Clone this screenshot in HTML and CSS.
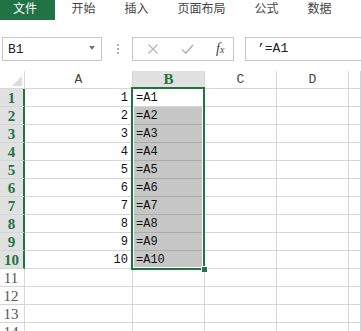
FILE: index.html
```html
<!DOCTYPE html>
<html lang="zh-CN">
<head>
    <meta charset="UTF-8">
    <title>Excel</title>
    <link rel="stylesheet" href="styles.css">
</head>
<body>
    <div class="tabs">
        <div class="tab tab-file">文件</div>
        <div class="tab">开始</div>
        <div class="tab">插入</div>
        <div class="tab">页面布局</div>
        <div class="tab">公式</div>
        <div class="tab">数据</div>
    </div>

    <div class="formula-bar">
        <div class="name-box">
            <span>B1</span>
            <span class="caret"></span>
        </div>
        <div class="grip"><i></i><i></i><i></i></div>
        <div class="fx-buttons">
            <svg width="12" height="12" viewBox="0 0 12 12"><path d="M1.5 1.5 L10.5 10.5 M10.5 1.5 L1.5 10.5" stroke="#b4b4b4" stroke-width="1.2" fill="none"/></svg>
            <svg width="13" height="12" viewBox="0 0 13 12"><path d="M1 6.5 L4.8 10 L12 2" stroke="#b4b4b4" stroke-width="1.6" fill="none"/></svg>
            <span class="fx">f<span>x</span></span>
        </div>
        <div class="formula-input">’=A1</div>
    </div>

    <div class="sheet">
        <div class="grid">
            <div class="corner"></div>
            <div class="col-head">A</div>
            <div class="col-head active">B</div>
            <div class="col-head">C</div>
            <div class="col-head">D</div>
            <div class="col-head"></div>

            <div class="row-head active">1</div><div class="cell num">1</div><div class="cell">=A1</div><div class="cell"></div><div class="cell"></div><div class="cell"></div>
            <div class="row-head active">2</div><div class="cell num">2</div><div class="cell sel">=A2</div><div class="cell"></div><div class="cell"></div><div class="cell"></div>
            <div class="row-head active">3</div><div class="cell num">3</div><div class="cell sel">=A3</div><div class="cell"></div><div class="cell"></div><div class="cell"></div>
            <div class="row-head active">4</div><div class="cell num">4</div><div class="cell sel">=A4</div><div class="cell"></div><div class="cell"></div><div class="cell"></div>
            <div class="row-head active">5</div><div class="cell num">5</div><div class="cell sel">=A5</div><div class="cell"></div><div class="cell"></div><div class="cell"></div>
            <div class="row-head active">6</div><div class="cell num">6</div><div class="cell sel">=A6</div><div class="cell"></div><div class="cell"></div><div class="cell"></div>
            <div class="row-head active">7</div><div class="cell num">7</div><div class="cell sel">=A7</div><div class="cell"></div><div class="cell"></div><div class="cell"></div>
            <div class="row-head active">8</div><div class="cell num">8</div><div class="cell sel">=A8</div><div class="cell"></div><div class="cell"></div><div class="cell"></div>
            <div class="row-head active">9</div><div class="cell num">9</div><div class="cell sel">=A9</div><div class="cell"></div><div class="cell"></div><div class="cell"></div>
            <div class="row-head active">10</div><div class="cell num">10</div><div class="cell sel">=A10</div><div class="cell"></div><div class="cell"></div><div class="cell"></div>
            <div class="row-head">11</div><div class="cell"></div><div class="cell"></div><div class="cell"></div><div class="cell"></div><div class="cell"></div>
            <div class="row-head">12</div><div class="cell"></div><div class="cell"></div><div class="cell"></div><div class="cell"></div><div class="cell"></div>
            <div class="row-head">13</div><div class="cell"></div><div class="cell"></div><div class="cell"></div><div class="cell"></div><div class="cell"></div>
            <div class="row-head">14</div><div class="cell"></div><div class="cell"></div><div class="cell"></div><div class="cell"></div><div class="cell"></div>
        </div>
        <div class="selection"></div>
        <div class="fill-handle"></div>
    </div>
</body>
</html>
```

FILE: styles.css
```css
body {
    margin: 0;
    background-color: #fff;
    overflow: hidden;
    font-family: "Liberation Sans", "Noto Sans CJK SC", sans-serif;
}

/* ribbon tabs */
.tabs {
    display: flex;
    height: 20px;
}
.tab {
    padding: 1px 14.5px 0;
    font-size: 12px;
    line-height: 14px;
    color: #444;
    font-family: "Noto Sans CJK SC", sans-serif;
}
.tab-file {
    background-color: #217346;
    color: #fff;
    padding: 1px 18px 0 13px;
    margin-right: 2px;
}

/* formula bar */
.formula-bar {
    display: flex;
    align-items: center;
    margin-top: 17px;
    height: 24px;
}
.name-box {
    box-sizing: border-box;
    margin-left: 2px;
    width: 100px;
    height: 24px;
    border: 1px solid #c6c6c6;
    display: flex;
    align-items: center;
    justify-content: space-between;
    padding: 0 6px 0 5px;
    font-family: "Liberation Mono", monospace;
    font-size: 13px;
    color: #222;
}
.caret {
    width: 0;
    height: 0;
    border-left: 3.5px solid transparent;
    border-right: 3.5px solid transparent;
    border-top: 4px solid #777;
    margin-top: -2px;
}
.grip {
    display: flex;
    flex-direction: column;
    gap: 2px;
    margin: 0 13px 0 15px;
}
.grip i {
    width: 2px;
    height: 2px;
    background-color: #b0b0b0;
}
.fx-buttons {
    box-sizing: border-box;
    width: 102px;
    height: 24px;
    border: 1px solid #c6c6c6;
    display: flex;
    align-items: center;
    padding-left: 14px;
    gap: 22px;
}
.fx {
    font-family: "Liberation Serif", serif;
    font-style: italic;
    font-size: 14px;
    color: #444;
}
.fx span {
    font-size: 10px;
}
.formula-input {
    box-sizing: border-box;
    flex: 1;
    margin-left: 11px;
    height: 24px;
    border: 1px solid #c6c6c6;
    border-right: none;
    padding-left: 11px;
    line-height: 22px;
    font-family: "Liberation Mono", monospace;
    font-size: 13px;
    color: #222;
}

/* sheet */
.sheet {
    position: relative;
    margin-top: 10px;
}
.grid {
    display: grid;
    grid-template-columns: 25px 108px 72px 72px 72px 1fr;
    grid-auto-rows: 18px;
}
.grid > div {
    box-sizing: border-box;
    border-right: 1px solid #d6d6d6;
    border-bottom: 1px solid #d6d6d6;
    overflow: hidden;
    white-space: nowrap;
}
.corner {
    position: relative;
}
.corner::after {
    content: "";
    position: absolute;
    right: 2px;
    bottom: 2px;
    width: 0;
    height: 0;
    border-left: 10px solid transparent;
    border-bottom: 10px solid #dcdcdc;
}
.col-head {
    text-align: center;
    font-family: "Liberation Mono", monospace;
    font-size: 13px;
    line-height: 17px;
    color: #444;
}
.col-head.active {
    background-color: #e1e1e1;
    color: #217346;
    font-weight: bold;
    font-family: "Liberation Serif", serif;
    font-size: 15px;
}
.row-head {
    text-align: center;
    padding-right: 2px;
    font-family: "Liberation Serif", serif;
    font-size: 15px;
    line-height: 18px;
    color: #555;
}
.grid > .row-head.active {
    background-color: #e1e1e1;
    color: #217346;
    font-weight: bold;
    padding-right: 0;
    border-right: 2px solid #217346;
}
.cell {
    font-family: "Liberation Mono", monospace;
    font-size: 12px;
    line-height: 15px;
    padding: 2px 1px 0 3px;
    color: #111;
}
.cell.num {
    text-align: right;
    padding-right: 4px;
}
.grid > .cell.sel {
    background-color: #c6c6c6;
    border-bottom-color: #ababab;
}

/* selection box B1:B10 */
.selection {
    position: absolute;
    left: 131px;
    top: 16px;
    width: 74px;
    height: 183px;
    box-sizing: border-box;
    border: 2px solid #217346;
    box-shadow: inset 0 0 0 1px #fff;
}
.fill-handle {
    position: absolute;
    left: 201px;
    top: 195px;
    width: 5px;
    height: 5px;
    background-color: #217346;
    border: 1px solid #fff;
}
```
